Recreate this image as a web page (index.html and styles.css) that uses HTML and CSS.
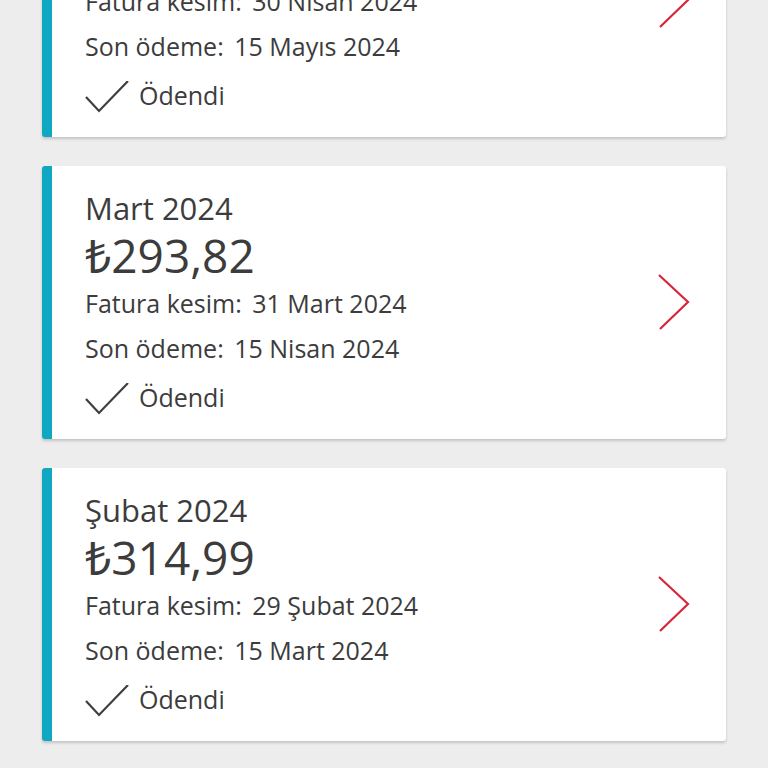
FILE: index.html
```html
<!DOCTYPE html>
<html lang="tr">
<head>
    <meta charset="UTF-8">
    <meta name="viewport" content="width=device-width, initial-scale=1.0">
    <title>Faturalarım</title>
    <link rel="stylesheet" href="styles.css">
</head>
<body>
    <div class="bill-list">
        <div class="bill-card">
            <div class="bill-info">
                <div class="bill-month">Nisan 2024</div>
                <div class="bill-amount">₺301,45</div>
                <div class="bill-row"><span class="bill-label">Fatura kesim:</span> <span>30 Nisan 2024</span></div>
                <div class="bill-row"><span class="bill-label">Son ödeme:</span> <span>15 Mayıs 2024</span></div>
                <div class="bill-status">
                    <svg class="check" width="44" height="32" viewBox="0 0 44 32"><path d="M1 16 L14 30 L43 0" fill="none" stroke="#3f3f3f" stroke-width="2.2"/></svg>
                    <span>Ödendi</span>
                </div>
            </div>
            <svg class="chevron" width="34" height="58" viewBox="0 0 34 58"><path d="M2 1 L31 28 L3 55" fill="none" stroke="#d7263a" stroke-width="2.2"/></svg>
        </div>

        <div class="bill-card">
            <div class="bill-info">
                <div class="bill-month">Mart 2024</div>
                <div class="bill-amount">₺293,82</div>
                <div class="bill-row"><span class="bill-label">Fatura kesim:</span> <span>31 Mart 2024</span></div>
                <div class="bill-row"><span class="bill-label">Son ödeme:</span> <span>15 Nisan 2024</span></div>
                <div class="bill-status">
                    <svg class="check" width="44" height="32" viewBox="0 0 44 32"><path d="M1 16 L14 30 L43 0" fill="none" stroke="#3f3f3f" stroke-width="2.2"/></svg>
                    <span>Ödendi</span>
                </div>
            </div>
            <svg class="chevron" width="34" height="58" viewBox="0 0 34 58"><path d="M2 1 L31 28 L3 55" fill="none" stroke="#d7263a" stroke-width="2.2"/></svg>
        </div>

        <div class="bill-card">
            <div class="bill-info">
                <div class="bill-month">Şubat 2024</div>
                <div class="bill-amount">₺314,99</div>
                <div class="bill-row"><span class="bill-label">Fatura kesim:</span> <span>29 Şubat 2024</span></div>
                <div class="bill-row"><span class="bill-label">Son ödeme:</span> <span>15 Mart 2024</span></div>
                <div class="bill-status">
                    <svg class="check" width="44" height="32" viewBox="0 0 44 32"><path d="M1 16 L14 30 L43 0" fill="none" stroke="#3f3f3f" stroke-width="2.2"/></svg>
                    <span>Ödendi</span>
                </div>
            </div>
            <svg class="chevron" width="34" height="58" viewBox="0 0 34 58"><path d="M2 1 L31 28 L3 55" fill="none" stroke="#d7263a" stroke-width="2.2"/></svg>
        </div>
    </div>
</body>
</html>
```

FILE: styles.css
```css
body {
    margin: 0;
    background-color: #ededed;
    font-family: "Open Sans", "Noto Sans", sans-serif;
    color: #3c3c3c;
    overflow: hidden;
    height: 768px;
}

.bill-list {
    display: flex;
    flex-direction: column;
    gap: 29px;
    margin: -136px 42px 0 42px;
}

.bill-card {
    display: flex;
    align-items: center;
    justify-content: space-between;
    height: 273px;
    box-sizing: border-box;
    background: white;
    border-left: 10px solid #0fa7c2;
    border-radius: 3px;
    box-shadow: 0 2px 3px rgba(0, 0, 0, 0.18);
    padding: 22px 35px 0 33px;
    align-self: stretch;
}

.bill-info {
    align-self: flex-start;
}

.bill-month {
    font-size: 31px;
    line-height: 40px;
}

.bill-amount {
    font-size: 46px;
    line-height: 52px;
    margin-top: 1px;
}

.bill-row {
    font-size: 25px;
    line-height: 45px;
    white-space: pre;
}

.bill-label {
    margin-right: 4px;
}

.bill-status {
    display: flex;
    align-items: center;
    gap: 10px;
    font-size: 25px;
    line-height: 45px;
    margin-top: 4px;
}

.check {
    display: block;
    margin-top: 2px;
}

.chevron {
    display: block;
    margin-top: -22px;
}
```
